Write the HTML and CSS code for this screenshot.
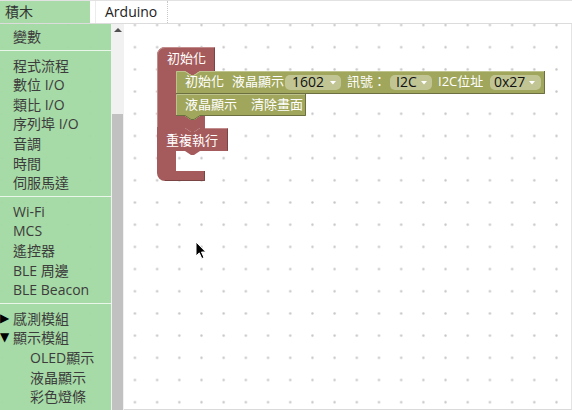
FILE: index.html
```html
<!DOCTYPE html>
<html lang="zh-Hant">
<head>
<meta charset="utf-8">
<title>積木</title>
<link rel="stylesheet" href="styles.css">
</head>
<body>
<div class="app">
  <div class="tabs">
    <div class="tab tab-active">積木</div>
    <div class="tab tab-code">Arduino</div>
  </div>
  <div class="main">
    <div class="toolbox">
      <div class="item">變數</div>
      <div class="sep"></div>
      <div class="item">程式流程</div>
      <div class="item">數位 I/O</div>
      <div class="item">類比 I/O</div>
      <div class="item">序列埠 I/O</div>
      <div class="item">音調</div>
      <div class="item">時間</div>
      <div class="item">伺服馬達</div>
      <div class="sep"></div>
      <div class="item">Wi-Fi</div>
      <div class="item">MCS</div>
      <div class="item">遙控器</div>
      <div class="item">BLE 周邊</div>
      <div class="item">BLE Beacon</div>
      <div class="sep"></div>
      <div class="item cat"><span class="tri">▶</span>感測模組</div>
      <div class="item cat"><span class="tri">▼</span>顯示模組</div>
      <div class="item sub">OLED顯示</div>
      <div class="item sub">液晶顯示</div>
      <div class="item sub">彩色燈條</div>
    </div>
    <div class="scrollbar">
      <div class="scroll-up"></div>
      <div class="scroll-track"></div>
      <div class="scroll-thumb"></div>
    </div>
    <div class="workspace">
      <svg class="blocks" width="448" height="385" viewBox="124 25 448 385" xmlns="http://www.w3.org/2000/svg">
        <!-- setup block -->
        <path class="red" d="M157,56 A8,8 0 0 1 165,48 H215 V72 H200 l-6,4 h-3 l-6,-4 H176 V117 H185 l6,4 h3 l6,-4 H205 V129 H200 l-6,4 h-3 l-6,-4 H157 Z"/>
        <path class="red-hl" d="M157.5,128 V56 A7.5,7.5 0 0 1 165,48.5 H214.5"/>
        <path class="red-dk" d="M214.5,49 V72"/>
        <text class="lbl" x="167" y="64">初始化</text>
        <!-- loop block -->
        <path class="red" d="M157,129 H185 l6,4 h3 l6,-4 H228 V152 H200 l-6,4 h-3 l-6,-4 H176 V172 H205 V182 H165 A8,8 0 0 1 157,174 Z"/>
        <path class="red-dk" d="M227.5,129.5 V151.5 M204.5,172 V181.5 H165"/>
        <path class="red-hl" d="M205,129.5 H227.5"/>
        <text class="lbl" x="166" y="146">重複執行</text>
        <!-- lcd init block -->
        <path class="grn" d="M176,72 H185 l6,4 h3 l6,-4 H545 V95 H176 Z"/>
        <path class="grn-dk" d="M544.5,72 V94.5 H176"/>
        <path class="grn-hl" d="M176.5,94 V72.5 H185 l6,4 h3 l6,-4 H544"/>
        <text class="lbl" x="185" y="87">初始化</text>
        <text class="lbl" x="232" y="87">液晶顯示</text>
        <rect class="fld" x="285" y="76" width="56" height="15" rx="5"/>
        <text class="fldt" x="292" y="88">1602</text>
        <path class="arr" d="M330,82 h6 l-3,3.5 z"/>
        <text class="lbl" x="347" y="87">訊號：</text>
        <rect class="fld" x="390" y="76" width="42" height="15" rx="5"/>
        <text class="fldt" x="396" y="88">I2C</text>
        <path class="arr" d="M421,82 h6 l-3,3.5 z"/>
        <text class="lbl" x="438" y="87">I2C位址</text>
        <rect class="fld" x="490" y="76" width="51" height="15" rx="5"/>
        <text class="fldt" x="494" y="88">0x27</text>
        <path class="arr" d="M529,82 h6 l-3,3.5 z"/>
        <!-- lcd clear block -->
        <path class="grn" d="M176,95 H306 V117 H200 l-6,4 h-3 l-6,-4 H176 Z"/>
        <path class="grn-dk" d="M305.5,95 V116.5 H200 l-6,4 h-3 l-6,-4 H176"/>
        <path class="grn-hl" d="M176.5,116 V95.5 H305"/>
        <text class="lbl" x="185" y="110">液晶顯示</text>
        <text class="lbl" x="251" y="110">清除畫面</text>
        <!-- cursor -->
        <path class="cursor" d="M196,243 L196,257 L199.3,253.9 L201.8,259.6 L204,258.6 L201.5,253 L205.8,253 Z"/>
      </svg>
    </div>
  </div>
</div>
</body>
</html>
```
FILE: styles.css
```css
html, body {
  margin: 0;
  padding: 0;
}
body {
  width: 572px;
  height: 410px;
  overflow: hidden;
  background: #fff;
  font-family: "Open Sans", "Noto Sans CJK TC", sans-serif;
}
.app {
  width: 572px;
  height: 410px;
  display: flex;
  flex-direction: column;
}
.tabs {
  height: 24px;
  flex: none;
  display: flex;
  border-top: 1px solid #e2e2e2;
  border-bottom: 1px solid #dcdcdc;
  box-sizing: border-box;
  background: #fff;
}
.tab {
  font-size: 14px;
  line-height: 21px;
  color: #222;
  padding-left: 5px;
  box-sizing: border-box;
}
.tab-active {
  width: 90px;
  background: #a8dba8;
  color: #333;
}
.tab-code {
  margin-left: 5px;
  width: 73px;
  padding-left: 9px;
  border-left: 1px solid #ececec;
  border-right: 1px dotted #c8c8c8;
}
.main {
  flex: 1;
  display: flex;
  position: relative;
  background-color: #fff;
  background-image: radial-gradient(circle, #c4c4c4 0.7px, rgba(200,200,200,0.45) 1.2px, rgba(255,255,255,0) 1.7px);
  background-size: 22.2px 22.2px;
  background-position: -9.3px -10.1px;
}
.toolbox {
  width: 111px;
  flex: none;
  background: rgba(162, 216, 162, 0.96);
  padding-top: 3px;
  box-sizing: border-box;
  font-size: 14px;
  color: #3c3c3c;
}
.item {
  height: 19.6px;
  line-height: 19.6px;
  padding-left: 13px;
  white-space: nowrap;
}
.item.cat {
  padding-left: 0;
  display: flex;
}
.tri {
  width: 13px;
  font-size: 12px;
  color: #000;
  font-family: "DejaVu Sans", sans-serif;
}
.item.sub {
  padding-left: 30px;
}
.sep {
  height: 1px;
  background: rgba(255, 255, 255, 0.75);
  margin: 3.5px 0 4.5px;
}
.scrollbar {
  width: 13px;
  flex: none;
  display: flex;
  flex-direction: column;
  background: #f1f1f1;
}
.scroll-up {
  height: 12px;
  flex: none;
  display: flex;
  justify-content: center;
  align-items: center;
}
.scroll-up::before {
  content: "";
  border-left: 4px solid transparent;
  border-right: 4px solid transparent;
  border-bottom: 4px solid #505050;
}
.scroll-track {
  height: 78px;
  flex: none;
}
.scroll-thumb {
  flex: 1;
  background: #c1c1c1;
  margin: 0 1px;
}
.workspace {
  flex: 1;
  position: relative;
  border-right: 1px solid #e4e4e4;
  border-bottom: 1px solid #dadada;
}
.blocks {
  position: absolute;
  left: 0;
  top: 0;
  overflow: visible;
}
.red { fill: #a55b5b; }
.red-dk { fill: none; stroke: #7a4444; stroke-width: 1; }
.red-hl { fill: none; stroke: #c28c8c; stroke-width: 1; }
.grn { fill: #a0a65b; }
.grn-dk { fill: none; stroke: #6c7040; stroke-width: 1; }
.grn-hl { fill: none; stroke: #bec28c; stroke-width: 1; }
.lbl {
  fill: #fff;
  font-size: 13px;
  font-family: "Open Sans", "Noto Sans CJK TC", sans-serif;
}
.fld { fill: rgba(255, 255, 255, 0.35); }
.fldt {
  fill: #111;
  font-size: 14px;
  font-family: "Open Sans", "Noto Sans CJK TC", sans-serif;
}
.arr { fill: #fff; }
.cursor { fill: #000; stroke: #fff; stroke-width: 1; stroke-linejoin: round; }
```
